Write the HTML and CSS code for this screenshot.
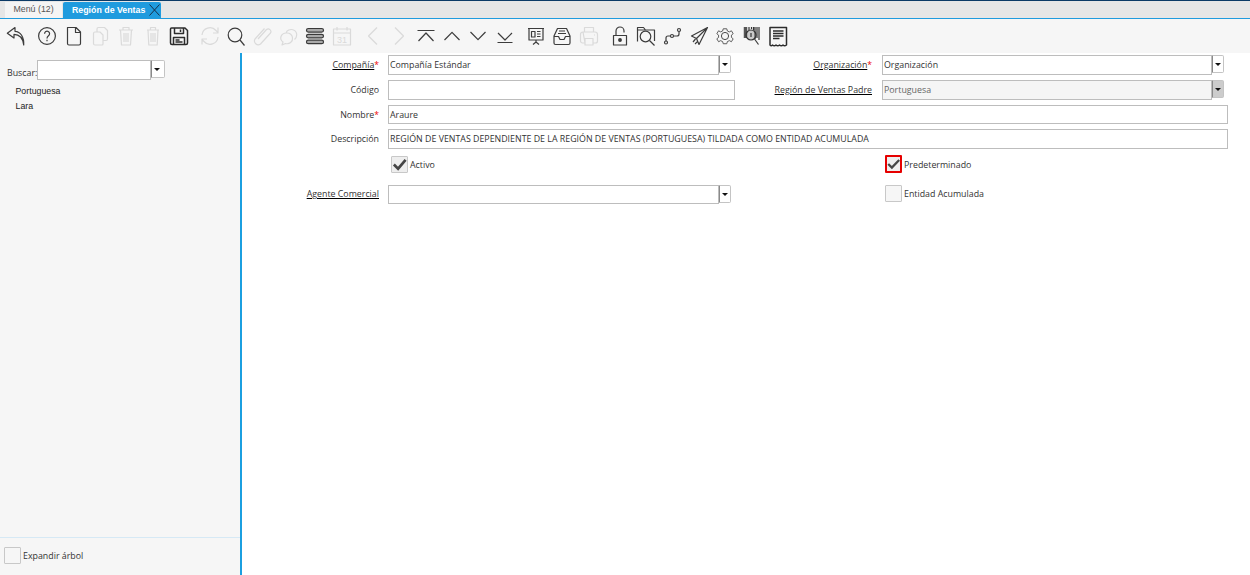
FILE: index.html
```html
<!DOCTYPE html>
<html lang="es">
<head>
<meta charset="utf-8">
<title>Región de Ventas</title>
<link rel="stylesheet" href="styles.css">
</head>
<body>
<header class="tabbar">
  <div class="tab">Menú (12)</div>
  <div class="tab tab-active">Región de Ventas
    <svg class="tab-x" width="11" height="12" viewBox="0 0 11 12"><path d="M.5 .5 10.5 11.5M10.5 .5 .5 11.5"/></svg>
  </div>
</header>

<nav class="toolbar">
  <div class="group">
    <span class="btn"><svg class="ic" viewBox="0 0 24 24"><path d="M11 3.500 3.300 9.200 10 14v-3.600c5 0 8.800 3.600 9.700 10.600.5-8-3.200-13.500-8.700-13.700z"/></svg></span>
  </div>
  <div class="group">
    <span class="btn"><svg class="ic" viewBox="0 0 24 24"><circle cx="12" cy="12" r="8.400"/><path d="M9.600 9.800a2.500 2.500 0 1 1 3.900 2c-1 .8-1.500 1.200-1.500 2.600M12 15.800v1.500"/></svg></span>
    <span class="btn"><svg class="ic" viewBox="0 0 24 24"><path d="M6.500 3.500h8.500l4.500 4.500v11.500a1.500 1.500 0 0 1-1.500 1.500H8a1.500 1.500 0 0 1-1.500-1.500zM14.500 3.500v5h5"/></svg></span>
    <span class="btn off"><svg class="ic" viewBox="0 0 24 24"><path d="M5.500 9.500a1.500 1.500 0 0 1 1.500-1.500h5l3 3v9a1 1 0 0 1-1 1H7a1.500 1.500 0 0 1-1.500-1.500zM9 8V5a1.500 1.500 0 0 1 1.500-1.500h6l3 3V15a1.500 1.500 0 0 1-1.500 1.500h-3"/></svg></span>
    <span class="btn off"><svg class="ic" viewBox="0 0 24 24"><path d="M5 6h14M9 6V3.500h6V6M6.500 6l1 15h9l1-15M10 9v9M12 9v9M14 9v9"/></svg></span>
    <span class="btn off"><svg class="ic" viewBox="0 0 24 24"><path d="M6 6h12M9.500 6V3.500h5V6M7 6l.8 15h8.400L17 6M10 9v9M12 9v9M14 9v9"/></svg></span>
    <span class="btn"><svg class="ic ic-bold" viewBox="0 0 24 24"><path d="M4.500 4h13.500l2.500 2.500V19a1.500 1.500 0 0 1-1.500 1.500H5A1.500 1.500 0 0 1 3.500 19V5a1 1 0 0 1 1-1zM7.500 4v5.500h9V4M13.500 5.500v2.500M6.500 20v-6.500h11V20M8.500 16h4M8.500 18h7"/></svg></span>
  </div>
  <div class="group">
    <span class="btn off"><svg class="ic" viewBox="0 0 24 24"><path d="M4 11a8 8 0 0 1 14-4.500l2 2M20 3.500v5.500h-5M20 13a8 8 0 0 1-14 4.500l-2-2M4 20.500V15h5"/></svg></span>
    <span class="btn"><svg class="ic" viewBox="0 0 24 24"><circle cx="11" cy="11" r="6.800"/><path d="M16 16l4.500 5.500"/></svg></span>
    <span class="btn off"><svg class="ic" viewBox="0 0 24 24"><path d="M7 15l8.500-9.500a2.700 2.700 0 0 1 4 3.500L9.500 20a3.800 3.800 0 0 1-5.500-5L13.500 4.500"/></svg></span>
    <span class="btn off"><svg class="ic" viewBox="0 0 24 24"><path d="M9 9a5.500 5 0 0 1 10.500 3c0 1.500-.8 2.500-2 3.500M9.500 9a5.500 5 0 0 0-3.500 9l-1 3 3.500-1.500a5.500 5 0 0 0 7-5.500A5.500 5 0 0 0 9.500 9z"/></svg></span>
    <span class="btn"><svg class="ic ic-bars" viewBox="0 0 24 24"><rect x="3.500" y="4.500" width="17" height="3.600" rx="1.800"/><rect x="3.500" y="10.300" width="17" height="3.600" rx="1.800"/><rect x="3.500" y="16.100" width="17" height="3.600" rx="1.800"/></svg></span>
    <span class="btn off"><svg class="ic" viewBox="0 0 24 24"><path d="M3.500 5h17v16h-17zM3.500 9h17M7 3v3.500M17 3v3.500"/><text class="cal" x="12" y="19" text-anchor="middle">31</text></svg></span>
  </div>
  <div class="group">
    <span class="btn off"><svg class="ic" viewBox="0 0 24 24"><path d="M16 3.500 7.500 12l8.500 8.500"/></svg></span>
    <span class="btn off"><svg class="ic" viewBox="0 0 24 24"><path d="M8 3.500l8.500 8.500L8 20.500"/></svg></span>
    <span class="btn"><svg class="ic" viewBox="0 0 24 24"><path d="M3.500 6.500h17M4.500 17 12 9l7.500 8"/></svg></span>
    <span class="btn"><svg class="ic" viewBox="0 0 24 24"><path d="M4.500 16 12 8.300l7.500 7.700"/></svg></span>
    <span class="btn"><svg class="ic" viewBox="0 0 24 24"><path d="M4.500 8 12 15.700 19.500 8"/></svg></span>
    <span class="btn"><svg class="ic" viewBox="0 0 24 24"><path d="M5 9l7 7 7-7M4.500 18.500h15"/></svg></span>
  </div>
  <div class="group">
    <span class="btn"><svg class="ic" viewBox="0 0 24 24"><path d="M4 4.500h16M5 4.500v11.500h14V4.500M12 16v2M12 18l-3 2.500M12 18l3 2.500M7.500 7.500h3.500v5.500H7.500zM13 7.500h3.500M13 10h3.500M13 12.500h3.500"/></svg></span>
    <span class="btn"><svg class="ic" viewBox="0 0 24 24"><path d="M7.500 4.500h9L20 12v7a1.500 1.500 0 0 1-1.500 1.500h-13A1.500 1.500 0 0 1 4 19v-7zM4 12.500h4.500l1.500 3h4l1.500-3H20M8 9.500h8M9 7h6"/></svg></span>
    <span class="btn off"><svg class="ic" viewBox="0 0 24 24"><path d="M7.500 8V3.500h9V8M6 8h12a2.500 2.500 0 0 1 2.500 2.500V17a2 2 0 0 1-2 2H16M8 19H5.500a2 2 0 0 1-2-2v-6.500A2.500 2.500 0 0 1 6 8zM8 14.500h8v6.500H8zM17 11h1"/></svg></span>
  </div>
  <div class="group">
    <span class="btn"><svg class="ic" viewBox="0 0 24 24"><path d="M8 11V7a4 4 0 0 1 8 0v1.500M5.500 11.500h13V21h-13z"/><circle class="dot" cx="12" cy="16" r="1.300"/></svg></span>
    <span class="btn"><svg class="ic" viewBox="0 0 24 24"><path d="M3.500 17.500V3.500h6l2 2.500h9v11M3.500 6h8"/><circle cx="11.500" cy="12.500" r="5.300"/><path d="M15.500 16.500l5 5"/></svg></span>
    <span class="btn"><svg class="ic" viewBox="0 0 24 24"><circle cx="6" cy="18.500" r="1.500"/><circle cx="12" cy="12" r="1.500"/><circle cx="19" cy="6" r="1.500"/><path d="M6 17v-3a2 2 0 0 1 2-2h2.500M13.500 12H17a2 2 0 0 0 2-2V7.500"/></svg></span>
    <span class="btn"><svg class="ic" viewBox="0 0 24 24"><path d="M20.500 3.500 4.500 12l5 2.500 2.500 6zM20.500 3.500 9.500 14.500M20.500 3.500 12 20.500M8.500 15 6 18M11 17l-3 3"/></svg></span>
    <span class="btn"><svg class="ic ic-thin" viewBox="0 0 24 24"><circle cx="12" cy="12" r="3.600"/><path transform="translate(12 12) scale(.88) translate(-12 -12)" d="M10 3.800h4l.7 2.500 2.300 1 2.300-1.200 2 3.300-2 1.600v2.600l2 1.600-2 3.300-2.300-1.200-2.300 1-.7 2.500h-4l-.7-2.500-2.300-1-2.300 1.200-2-3.300 2-1.600v-2.600l-2-1.600 2-3.300L7 7.300l2.300-1z"/></svg></span>
    <span class="btn"><svg class="ic" viewBox="0 0 24 24"><path class="bars-thin" d="M9 3v3M11.500 3v2M13.500 3v3M15 3v12M17 3v11M19 3v13"/><path class="bars-thick" d="M5.500 3v11"/><circle class="lens" cx="11" cy="11" r="5"/><path d="M14.500 15l4 5.500"/><path class="bars-thin" d="M11 9v4"/></svg></span>
    <span class="btn"><svg class="ic ic-bold" viewBox="0 0 24 24"><path d="M4 3.500h16.500v17.500c-1.300 1-2.600 1-3.500 0-1 1-2.500 1-3.500 0-1 1-2.500 1-3.500 0-1 1-2.500 1-3.500 0-1 1-1.600 1-2.500 0zM7 7h10.500M7 9.500h10.500M7 12h10.500M7 14.500h6.500"/></svg></span>
  </div>
</nav>

<main class="main">
  <aside class="side">
    <div class="search">
      <span class="search-label">Buscar:</span>
      <div class="combo combo-search"><span class="input"></span><span class="drop"></span></div>
    </div>
    <ul class="tree">
      <li>Portuguesa</li>
      <li>Lara</li>
    </ul>
    <div class="expand">
      <span class="check"></span>
      <span>Expandir árbol</span>
    </div>
  </aside>

  <section class="form">
    <label class="lbl"><u>Compañía</u><i>*</i></label>
    <div class="combo combo-field"><span class="input">Compañía Estándar</span><span class="drop"></span></div>
    <label class="lbl lbl-r"><u>Organización</u><i>*</i></label>
    <div class="combo combo-field combo-r"><span class="input">Organización</span><span class="drop"></span></div>

    <label class="lbl">Código</label>
    <span class="input"></span>
    <label class="lbl lbl-r"><u>Región de Ventas Padre</u></label>
    <div class="combo combo-field combo-r combo-off"><span class="input">Portuguesa</span><span class="drop"></span></div>

    <label class="lbl">Nombre<i>*</i></label>
    <span class="input wide">Araure</span>

    <label class="lbl">Descripción</label>
    <span class="input wide">REGIÓN DE VENTAS DEPENDIENTE DE LA REGIÓN DE VENTAS (PORTUGUESA) TILDADA COMO ENTIDAD ACUMULADA</span>

    <span></span>
    <div class="checkrow"><span class="check on"><svg viewBox="0 0 16 16"><path d="M2 8 6.500 12.500 14.500 3"/></svg></span><span class="checktext">Activo</span></div>
    <span></span>
    <div class="checkrow"><span class="check on focus"><svg viewBox="0 0 16 16"><path d="M1.500 8 6 12.500 15 3"/></svg></span><span class="checktext">Predeterminado</span></div>

    <label class="lbl lbl-low"><u>Agente Comercial</u></label>
    <div class="combo combo-field combo-low"><span class="input"></span><span class="drop"></span></div>
    <span></span>
    <div class="checkrow checkrow-low"><span class="check"></span><span>Entidad Acumulada</span></div>
  </section>
</main>
</body>
</html>
```

FILE: styles.css
```css
* { box-sizing: border-box; }
html, body { margin: 0; height: 575px; overflow: hidden; background: #fff; }
body {
  display: flex;
  flex-direction: column;
  font: 8.830px "Open Sans", sans-serif;
  color: #333;
}

/* tabs */
.tabbar {
  height: 19px;
  flex: none;
  display: flex;
  align-items: flex-end;
  gap: 1px;
  padding-left: 5px;
  background: #e6e6e6;
  border-top: 1px solid #0b3a66;
  border-bottom: 1px solid #1f9bde;
}
.tab {
  height: 16px;
  width: 57px;
  padding-left: 8.500px;
  font: 8.800px/15px "Liberation Sans", sans-serif;
  color: #555;
  background: #f4f4f4;
}
.tab-active {
  width: 98px;
  display: flex;
  justify-content: space-between;
  align-items: center;
  padding: 0 1px 0 9px;
  font-weight: bold;
  color: #fff;
  background: #1f9bde;
  border-radius: 2px 2px 0 0;
}
.tab-x { fill: none; stroke: #17304a; stroke-width: 1; }

/* toolbar */
.toolbar {
  height: 34px;
  flex: none;
  display: flex;
  gap: 4.600px;
  align-items: center;
  padding-left: 2.800px;
  background: #f6f6f6;
}
.group { display: flex; }
.btn {
  width: 26.400px;
  height: 24px;
  display: flex;
  justify-content: center;
}
.ic {
  width: 24px;
  height: 24px;
  fill: none;
  stroke: #3c3c3c;
  stroke-width: 1.200;
  stroke-linejoin: round;
}
.ic-bold { stroke-width: 1.500; stroke: #2c2c2c; }
.ic-thin { stroke-width: 1; stroke: #4a4a4a; }
.ic-bars { fill: #aaa; stroke-width: 1.200; stroke: #3a3a3a; }
.off .ic { stroke: #dadada; }
.cal { font: 9px "Liberation Sans", sans-serif; fill: #dadada; stroke: none; }
.dot { fill: #3c3c3c; }
.bars-thin { stroke-width: 1.200; stroke: #333; }
.bars-thick { stroke-width: 3.500; stroke: #555; }
.lens { fill: #777; fill-opacity: .35; stroke: #333; }

/* layout */
.main { flex: 1; display: flex; min-height: 0; }
.side {
  width: 242px;
  flex: none;
  display: flex;
  flex-direction: column;
  padding-top: 7px;
  background: #f6f6f6;
  border-right: 2px solid #1b9fe0;
}
.search {
  display: flex;
  align-items: center;
  height: 20px;
  padding-left: 7px;
}
.search-label { width: 30px; padding-top: 5px; white-space: nowrap; }
.combo { display: flex; align-items: flex-start; }
.input {
  display: block;
  height: 100%;
  padding-left: 1px;
  line-height: 18px;
  white-space: nowrap;
  background: #fff;
  border: 1px solid #bdbdbd;
}
.combo .input { flex: 1; }
.drop {
  position: relative;
  flex: none;
  width: 12px;
  height: 18px;
  background: #fff;
  border: 1px solid #c4c4c4;
  border-left-color: #8a8a8a;
  border-radius: 0 2px 2px 0;
}
.drop::after {
  content: "";
  position: absolute;
  top: 7px;
  left: 2px;
  border: 3px solid transparent;
  border-top: 3px solid #111;
  border-bottom: 0;
}
.combo-search { width: 128px; height: 20px; }
.combo-search .drop { width: 14px; }
.tree {
  margin: 0;
  padding: 4px 0 0 15.500px;
  list-style: none;
  font: 8.800px/15px "Liberation Sans", sans-serif;
  color: #222;
  flex: 1;
}
.expand {
  height: 38px;
  display: flex;
  align-items: center;
  gap: 2px;
  padding: 0 0 2px 4px;
  border-top: 1px solid #d6e9f5;
}
.check {
  flex: none;
  display: block;
  width: 17px;
  height: 17px;
  background: #f6f6f6;
  border: 1px solid #c8c8c8;
  border-radius: 1px;
}
.check svg { display: block; width: 15px; height: 15px; fill: none; stroke: #454545; stroke-width: 2.800; }
.check.on { background: #eee; }
.check.focus { border: 2px solid #e60000; width: 17px; height: 18px; }
.check.focus svg { width: 13px; height: 14px; }
.checktext { padding-top: 2px; }

/* form */
.form {
  flex: 1;
  display: grid;
  grid-template-columns: 146px 347px 147px 346px;
  grid-template-rows: 20px 20px 19px 20px 18px 19px;
  row-gap: 5px;
  align-content: start;
  padding-top: 2px;
}
.lbl {
  display: block;
  padding-right: 9px;
  text-align: right;
  line-height: 20px;
}
.lbl u { color: #333; text-decoration-color: #000; }
.lbl i { color: #e00; font-style: normal; font-size: 8.500px; }
.lbl-r { padding-right: 10px; }
.wide { grid-column: 2 / 5; }
.combo-field .input { height: 20px; }
.combo-off .input { background: #f5f5f5; color: #666; }
.combo-off .drop { background: #ccc; }
.combo-field { width: 343px; }
.combo-r { width: 342px; }
.combo-low .input { height: 19px; }
.combo-low { margin-top: 8px; }
.lbl-low { margin-top: 8px; line-height: 18px; }
.checkrow {
  display: flex;
  align-items: center;
  gap: 2px;
  padding-left: 3px;
  margin-top: 1px;
  height: 18px;
}
.checkrow-low { margin-top: 8px; align-items: flex-start; line-height: 18px; }
```
